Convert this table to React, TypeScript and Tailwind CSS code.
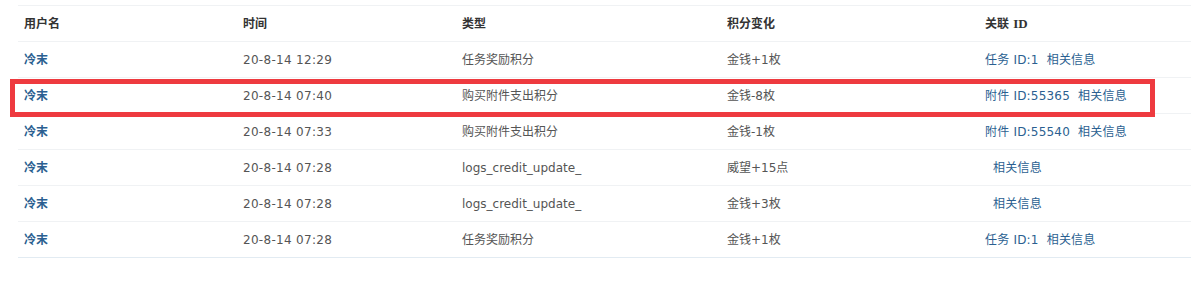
const rows = [
  { user: "冷末", time: "20-8-14 12:29", type: "任务奖励积分", change: "金钱+1枚", ref: "任务 ID:1" },
  { user: "冷末", time: "20-8-14 07:40", type: "购买附件支出积分", change: "金钱-8枚", ref: "附件 ID:55365" },
  { user: "冷末", time: "20-8-14 07:33", type: "购买附件支出积分", change: "金钱-1枚", ref: "附件 ID:55540" },
  { user: "冷末", time: "20-8-14 07:28", type: "logs_credit_update_", change: "威望+15点", ref: "" },
  { user: "冷末", time: "20-8-14 07:28", type: "logs_credit_update_", change: "金钱+3枚", ref: "" },
  { user: "冷末", time: "20-8-14 07:28", type: "任务奖励积分", change: "金钱+1枚", ref: "任务 ID:1" },
];

export default function App() {
  return (
    <div className="relative h-[307px] w-[1191px] overflow-hidden bg-white pt-[5px] pl-[18px] font-['DejaVu_Sans','Noto_Sans_CJK_SC',sans-serif] text-[12px] text-[#555]">
      <table className="w-[1173px] table-fixed border-collapse">
        <colgroup>
          <col className="w-[219px]" />
          <col className="w-[219px]" />
          <col className="w-[265px]" />
          <col className="w-[258px]" />
          <col className="w-[212px]" />
        </colgroup>
        <thead>
          <tr className="h-[36px] border-y border-[#f0f2f4] text-left font-bold text-[#333]">
            <th className="pl-[6px] font-bold">用户名</th>
            <th className="pl-[6px] font-bold">时间</th>
            <th className="pl-[6px] font-bold">类型</th>
            <th className="pl-[6px] font-bold">积分变化</th>
            <th className="pl-[6px] font-bold">
              关联 <span className="font-['Liberation_Serif',serif] text-[13px]">ID</span>
            </th>
          </tr>
        </thead>
        <tbody>
          {rows.map((r, i) => (
            <tr
              key={i}
              className={
                i === rows.length - 1
                  ? "h-[36px] border-b border-[#e2ebf2]"
                  : "h-[36px] border-b border-[#f0f2f4]"
              }
            >
              <td className="pl-[6px] font-bold text-[#2b5f91]">{r.user}</td>
              <td className="pl-[6px] tracking-[0.3px]">{r.time}</td>
              <td className="pl-[6px]">{r.type}</td>
              <td className="pl-[6px]">{r.change}</td>
              <td className="pl-[6px] whitespace-pre tracking-[0.2px] text-[#2b5f91]">
                {r.ref ? `${r.ref}  相关信息` : "  相关信息"}
              </td>
            </tr>
          ))}
        </tbody>
      </table>
      <div className="absolute top-[79px] left-[10px] h-[38px] w-[1145px] border-[5px] border-[#ee3a3f]" />
    </div>
  );
}
